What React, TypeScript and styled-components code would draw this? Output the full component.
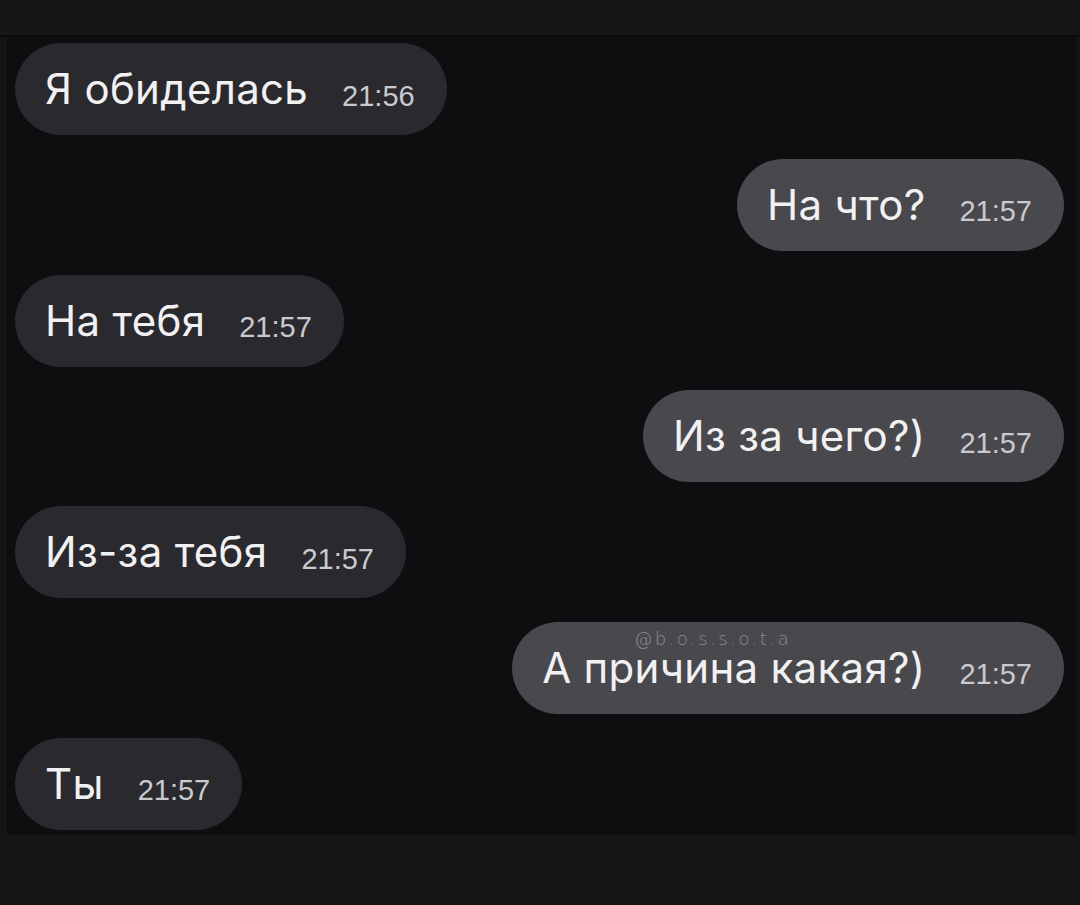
import React from "react";
import styled, { createGlobalStyle } from "styled-components";

const GlobalStyle = createGlobalStyle`
  html, body {
    margin: 0;
    padding: 0;
    background: #151515;
  }
  body {
    font-family: Inter, "Liberation Sans", Arial, sans-serif;
  }
`;

/* =========================
   FRAME
========================= */

const Page = styled.main`
  width: 1080px;
  height: 905px;
  display: flex;
  flex-direction: column;
  background-color: #151515;
  overflow: hidden;
`;

const TopStrip = styled.div`
  height: 35px;
  background-color: #161616;
  border-bottom: 2px solid #0b0b0b;
`;

const ChatArea = styled.section`
  height: 798px;
  margin: 0 4px 0 5px;
  padding: 6px 12px 0 9px;
  box-sizing: border-box;
  background-color: #0e0d10;
  border-left: 1px solid #1a1a1d;
  display: flex;
  flex-direction: column;
  gap: 23.8px;
`;

/* =========================
   MESSAGES
========================= */

const Row = styled.div<{ $out?: boolean }>`
  display: flex;
  justify-content: ${(p) => (p.$out ? "flex-end" : "flex-start")};
`;

const Bubble = styled.div<{ $out?: boolean }>`
  position: relative;
  height: 92px;
  padding: 0 32px 0 30px;
  box-sizing: border-box;
  border-radius: 46px;
  display: inline-flex;
  align-items: center;
  background-color: ${(p) => (p.$out ? "#49484d" : "#2a292e")};
`;

const MessageText = styled.span`
  font-size: 42px;
  letter-spacing: 0.3px;
  line-height: 1;
  color: #f1f1f3;
  white-space: nowrap;
`;

const Time = styled.span`
  margin-left: 34px;
  padding-top: 14px;
  font-family: "Liberation Sans", Arial, sans-serif;
  font-size: 29px;
  line-height: 1;
  color: #c9c9ce;
`;

const Watermark = styled.span`
  position: absolute;
  left: 122px;
  top: 8px;
  font-size: 18px;
  line-height: 1;
  letter-spacing: 2.5px;
  color: #8d8c92;
  font-family: "DejaVu Sans", sans-serif;
  font-weight: 300;
`;

const BottomStrip = styled.div`
  flex: 1;
  background-color: #151515;
`;

type Message = {
  text: string;
  time: string;
  out?: boolean;
  mark?: string;
};

const messages: Message[] = [
  { text: "Я обиделась", time: "21:56" },
  { text: "На что?", time: "21:57", out: true },
  { text: "На тебя", time: "21:57" },
  { text: "Из за чего?)", time: "21:57", out: true },
  { text: "Из-за тебя", time: "21:57" },
  { text: "А причина какая?)", time: "21:57", out: true, mark: "@b.o.s.s.o.t.a" },
  { text: "Ты", time: "21:57" },
];

/* =========================
   COMPONENT
========================= */

const App: React.FC = () => {
  return (
    <>
      <GlobalStyle />
      <Page>
        <TopStrip />
        <ChatArea>
          {messages.map((m, i) => (
            <Row key={i} $out={m.out}>
              <Bubble $out={m.out}>
                {m.mark && <Watermark>{m.mark}</Watermark>}
                <MessageText>{m.text}</MessageText>
                <Time>{m.time}</Time>
              </Bubble>
            </Row>
          ))}
        </ChatArea>
        <BottomStrip />
      </Page>
    </>
  );
};

export default App;
